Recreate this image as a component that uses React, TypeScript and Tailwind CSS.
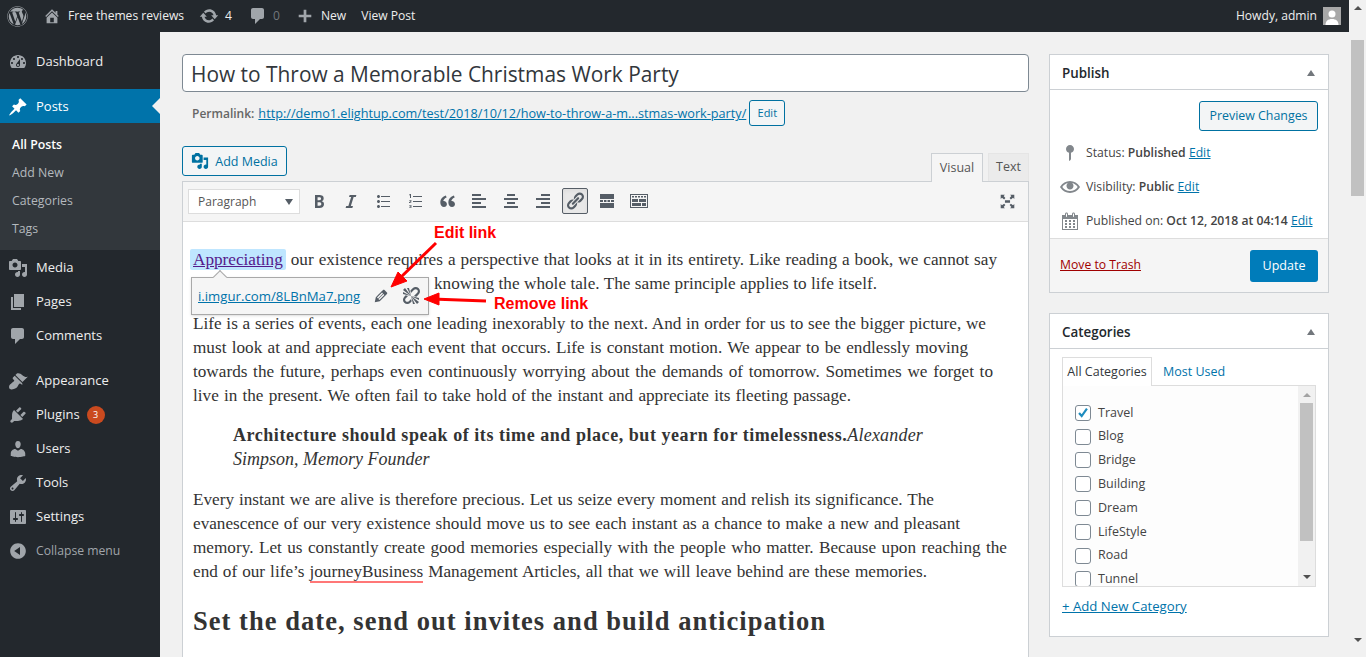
import type { ReactNode } from 'react';
import { FaWordpress } from 'react-icons/fa';

const icons: Record<string, string> = {
  dashboard: 'M3.76 16h12.48c1.1-1.37 1.76-3.11 1.76-5 0-4.42-3.58-8-8-8s-8 3.58-8 8c0 1.89.66 3.63 1.76 5zM10 4c.55 0 1 .45 1 1s-.45 1-1 1-1-.45-1-1 .45-1 1-1zM6 6c.55 0 1 .45 1 1s-.45 1-1 1-1-.45-1-1 .45-1 1-1zm8 0c.55 0 1 .45 1 1s-.45 1-1 1-1-.45-1-1 .45-1 1-1zm-5.37 5.55L12 7v6c0 1.1-.9 2-2 2s-2-.9-2-2c0-.57.24-1.08.63-1.45zM4 10c.55 0 1 .45 1 1s-.45 1-1 1-1-.45-1-1 .45-1 1-1zm12 0c.55 0 1 .45 1 1s-.45 1-1 1-1-.45-1-1 .45-1 1-1zm-5 3c0-.55-.45-1-1-1s-1 .45-1 1 .45 1 1 1 1-.45 1-1z',
  post: 'M10.44 3.02l1.82-1.82 6.36 6.35-1.83 1.82c-1.05-.68-2.48-.57-3.41.36l-.75.75c-.92.93-1.04 2.35-.35 3.41l-1.83 1.82-2.41-2.41-2.8 2.79c-.42.42-3.38 2.71-3.8 2.29s1.86-3.39 2.28-3.81l2.79-2.79L4.1 9.36l1.83-1.82c1.05.69 2.48.57 3.4-.36l.75-.75c.93-.92 1.05-2.35.36-3.41z',
  media: 'M13 11V4c0-.55-.45-1-1-1h-1.67L9 1H5L3.67 3H2c-.55 0-1 .45-1 1v7c0 .55.45 1 1 1h10c.55 0 1-.45 1-1zM7 4.5c1.38 0 2.5 1.12 2.5 2.5S8.38 9.5 7 9.5 4.5 8.38 4.5 7 5.62 4.5 7 4.5zM14 6h5v10.5c0 1.38-1.12 2.5-2.5 2.5S14 17.88 14 16.5s1.12-2.5 2.5-2.5c.17 0 .34.02.5.05V9h-3V6zm-4 8.05V13h2v3.5c0 1.38-1.12 2.5-2.5 2.5S7 17.88 7 16.5 8.12 14 9.5 14c.17 0 .34.02.5.05z',
  page: 'M6 15V2h10v13H6zm-1 1h8v2H3V5h2v11z',
  comment: 'M5 2h9c1.1 0 2 .9 2 2v7c0 1.1-.9 2-2 2h-2l-5 5v-5H5c-1.1 0-2-.9-2-2V4c0-1.1.9-2 2-2z',
  appearance: 'M14.48 11.06L7.41 3.99l1.5-1.5c.5-.56 2.3-.47 3.51.32 1.21.8 1.43 1.28 2.91 2.1 1.18.64 2.45 1.26 4.45.85zm-.71.71L6.7 4.7 4.93 6.47c-.39.39-.39 1.02 0 1.41l1.06 1.06c.39.39.39 1.03 0 1.42-.6.6-1.43 1.11-2.21 1.69-.35.26-.7.53-1.01.84C1.43 13.23.18 16.28 2 18c.52.48 1.07.5 1.77.44.7-.06 1.43-.25 2.13-.46 1.6-.48 3.12-1.28 3.83-2.64.38-.73.66-1.48 1.13-2.13.3-.42.65-.73 1.07-.75.47-.02.98.4 1.32.77.39.39 1.02.39 1.41 0z',
  plugin: 'M13.11 4.36L9.87 7.6 8 5.73l3.24-3.24c.35-.34 1.05-.2 1.56.32.52.51.66 1.21.31 1.55zm-8 1.77l.91-1.12 9.01 9.01-1.19.84c-.71.71-2.63 1.16-3.82 1.16H6.14L4.9 17.26c-.59.59-1.54.59-2.12 0-.59-.58-.59-1.53 0-2.12l1.24-1.24v-3.88c0-1.13.4-3.19 1.09-3.89zm7.26 3.97l3.24-3.24c.34-.35 1.04-.21 1.55.31.52.51.66 1.21.31 1.55l-3.24 3.25z',
  users: 'M10 9.25c-2.27 0-2.73-3.44-2.73-3.44C7 4.02 7.82 2 9.97 2c2.16 0 2.98 2.02 2.71 3.81 0 0-.41 3.44-2.68 3.44zm0 2.57L12.72 10c2.39 0 4.52 2.33 4.52 4.53v2.49s-3.65 1.13-7.24 1.13c-3.65 0-7.24-1.13-7.24-1.13v-2.49c0-2.25 1.94-4.48 4.47-4.48z',
  tools: 'M16.68 9.77c-1.34 1.34-3.3 1.67-4.95.99l-5.41 6.52c-.99.99-2.59.99-3.58 0s-.99-2.59 0-3.57l6.52-5.42c-.68-1.65-.35-3.61.99-4.95 1.28-1.28 3.12-1.62 4.72-1.06l-2.89 2.89 2.82 2.82 2.86-2.87c.53 1.58.18 3.39-1.08 4.65zM3.81 16.21c.4.39 1.04.39 1.43 0 .4-.4.4-1.04 0-1.43-.39-.4-1.03-.4-1.43 0-.39.39-.39 1.03 0 1.43z',
  settings: 'M18 16V4c0-.55-.45-1-1-1H3c-.55 0-1 .45-1 1v12c0 .55.45 1 1 1h14c.55 0 1-.45 1-1zM8 11h1c.55 0 1 .45 1 1s-.45 1-1 1H8v1.5c0 .28-.22.5-.5.5s-.5-.22-.5-.5V13H6c-.55 0-1-.45-1-1s.45-1 1-1h1V5.5c0-.28.22-.5.5-.5s.5.22.5.5V11zm5-2h-1c-.55 0-1-.45-1-1s.45-1 1-1h1V5.5c0-.28.22-.5.5-.5s.5.22.5.5V7h1c.55 0 1 .45 1 1s-.45 1-1 1h-1v5.5c0 .28-.22.5-.5.5s-.5-.22-.5-.5V9z',
  collapse: 'M10 2.16c4.33 0 7.84 3.51 7.84 7.84s-3.51 7.84-7.84 7.84S2.16 14.33 2.16 10 5.71 2.16 10 2.16zm2 11.72V6.12L6.18 9.97z',
  home: 'M16 8.5l1.53 1.53-1.06 1.06L10 4.62l-6.47 6.47-1.06-1.06L10 2.5l4 4v-2h2v4zm-6-2.46l6 5.99V18H4v-5.97zM12 17v-5H8v5h4z',
  update: 'M10.2 3.28c3.53 0 6.43 2.61 6.92 6h2.08l-3.5 4-3.5-4h2.32c-.45-1.97-2.21-3.45-4.32-3.45-1.45 0-2.73.71-3.54 1.78L4.95 5.66C6.23 4.2 8.11 3.28 10.2 3.28zm-.4 13.44c-3.52 0-6.43-2.61-6.92-6H.8l3.5-4c1.17 1.33 2.33 2.67 3.5 4H5.48c.45 1.97 2.21 3.45 4.32 3.45 1.45 0 2.73-.71 3.54-1.78l1.71 1.95c-1.28 1.46-3.15 2.38-5.25 2.38z',
  plus: 'M17 8.5v3h-5.5V17h-3v-5.5H3v-3h5.5V3h3v5.5H17z',
  bold: 'M6 4v13h4.54c1.37 0 2.46-.33 3.26-1 .8-.66 1.2-1.58 1.2-2.77 0-.84-.17-1.51-.51-2.01s-.9-.85-1.67-1.03v-.09c.57-.1 1.02-.4 1.36-.9s.51-1.13.51-1.91c0-1.14-.39-1.98-1.17-2.5C12.75 4.26 11.5 4 9.78 4H6zm2.57 5.15V6.26h1.36c.73 0 1.27.11 1.61.32.34.22.51.58.51 1.07 0 .54-.16.92-.47 1.15s-.82.35-1.51.35h-1.5zm0 2.19h1.6c1.44 0 2.16.53 2.16 1.61 0 .6-.17 1.05-.51 1.34s-.86.43-1.57.43H8.57v-3.38z',
  italic: 'M14.78 6h-2.13l-2.8 9h2.12l-.62 2H4.6l.62-2h2.14l2.8-9H8.03l.62-2h6.75z',
  ul: 'M5.5 7C4.67 7 4 6.33 4 5.5 4 4.68 4.67 4 5.5 4 6.32 4 7 4.68 7 5.5 7 6.33 6.32 7 5.5 7zM8 5h9v1H8V5zm-2.5 7c-.83 0-1.5-.67-1.5-1.5C4 9.68 4.67 9 5.5 9c.82 0 1.5.68 1.5 1.5 0 .83-.68 1.5-1.5 1.5zM8 10h9v1H8v-1zm-2.5 7c-.83 0-1.5-.67-1.5-1.5 0-.82.67-1.5 1.5-1.5.82 0 1.5.68 1.5 1.5 0 .83-.68 1.5-1.5 1.5zM8 15h9v1H8v-1z',
  ol: 'M6 7V3H5.2L4 3.8v.8l1-.6V7h1zM8 5h9v1H8V5zM4 9h2.4v1.6L5 11.4h1.4v.6H4v-.8l1.5-1V9.6H4V9zM8 10h9v1H8v-1zM4 14h2.4v3H4v-.6h1.6v-.6H4.6v-.5h1v-.7H4V14zM8 15h9v1H8v-1z',
  quote: 'M9.49 13.22c0-.78-.27-1.45-.8-1.99-.51-.53-1.16-.8-1.94-.8-.12 0-.26.02-.43.06.1-.7.42-1.33.96-1.9.55-.59 1.2-.99 1.95-1.21L8.6 5.6C7.2 6 6.04 6.78 5.12 7.93 4.2 9.07 3.75 10.35 3.75 11.77c0 1.12.3 2.05.9 2.76.61.72 1.38 1.08 2.3 1.08.71 0 1.31-.23 1.8-.69.5-.47.74-1.04.74-1.7zm7 0c0-.78-.27-1.45-.8-1.99-.51-.53-1.16-.8-1.94-.8-.12 0-.26.02-.43.06.1-.7.42-1.33.96-1.9.55-.59 1.2-.99 1.95-1.21L15.6 5.6c-1.4.4-2.56 1.18-3.48 2.33-.92 1.14-1.37 2.42-1.37 3.84 0 1.12.3 2.05.9 2.76.61.72 1.38 1.08 2.3 1.08.71 0 1.31-.23 1.8-.69.5-.47.74-1.04.74-1.7z',
  alignLeft: 'M12 5V3H3v2h9zm5 4V7H3v2h14zm-5 4v-2H3v2h9zm5 4v-2H3v2h14z',
  alignCenter: 'M14 5V3H6v2h8zm3 4V7H3v2h14zm-3 4v-2H6v2h8zm3 4v-2H3v2h14z',
  alignRight: 'M17 5V3H8v2h9zm0 4V7H3v2h14zm0 4v-2H8v2h9zm0 4v-2H3v2h14z',
  link: 'M17.74 2.76c1.68 1.69 1.68 4.41 0 6.1l-1.53 1.52c-1.12 1.12-2.7 1.47-4.14 1.09l2.62-2.61.76-.77.76-.76c.84-.84.84-2.2 0-3.04-.84-.85-2.2-.85-3.04 0l-.77.76-3.38 3.38c-.37-1.44-.02-3.02 1.1-4.14l1.52-1.53c1.69-1.68 4.42-1.68 6.1 0zM8.59 13.43l5.34-5.34c.42-.42.42-1.1 0-1.52-.44-.43-1.13-.39-1.53 0l-5.33 5.34c-.42.42-.42 1.1 0 1.52.44.43 1.13.39 1.52 0zm-.76 2.29l4.14-4.15c.38 1.44.03 3.02-1.09 4.14l-1.52 1.53c-1.69 1.68-4.41 1.68-6.1 0-1.68-1.68-1.68-4.42 0-6.1l1.53-1.52c1.12-1.12 2.7-1.47 4.14-1.1l-4.14 4.15c-.85.84-.85 2.2 0 3.05.84.84 2.2.84 3.04 0z',
  more: 'M3 3h14v5H3V3zm0 6h3v2H3V9zm4 0h2.5v2H7V9zm3.5 0H13v2h-2.5V9zM14 9h3v2h-3V9zM3 12h14v5H3v-5z',
  sink: 'M1 3h18v14H1V3zm1 1v12h16V4H2zm1 1h2v1.5H3V5zm3 0h2v1.5H6V5zm3 0h2v1.5H9V5zm3 0h2v1.5h-2V5zm3 0h2v1.5h-2V5zM3 8h6v3H3V8zm7 0h7v3h-7V8zM3 12h9v3H3v-3zm10 0h4v3h-4v-3z',
  fullscreen: 'M7 8.5h6v3H7v-3zM2 2h5L5.5 3.5 7.5 6 6 7.5 3.5 5.5 2 7V2zm16 0v5l-1.5-1.5L14 7.5 12.5 6l2-2.500L13 2h5zM2 18v-5l1.500 1.500L6 12.5 7.500 14l-2 2.500L7 18H2zm16 0h-5l1.500-1.500-2-2.500 1.500-1.500 2.500 2L18 13v5z',
  unlink: 'M17.74 2.26c1.68 1.69 1.68 4.41 0 6.1l-1.53 1.52c-.32.33-.69.58-1.08.77L13 10l1.69-1.64.76-.77.76-.76c.84-.84.84-2.2 0-3.04-.84-.85-2.2-.85-3.04 0l-.77.76-.76.76L10 7l-.65-2.14c.19-.38.44-.75.77-1.07l1.52-1.53c1.69-1.68 4.42-1.68 6.1 0zM2 4l8 6-6-8zm4-2l4 8-2-8H6zM2 6l8 4-8-2V6zm7.36 7.69L10 13l.74 2.35-1.38 1.39c-1.69 1.68-4.41 1.68-6.1 0-1.68-1.68-1.68-4.42 0-6.1l1.39-1.38L7 10l-.69.64-1.52 1.53c-.85.84-.85 2.2 0 3.04.84.85 2.2.85 3.04 0zM18 16l-8-6 6 8zm-4 2l-4-8 2 8h2zm4-4l-8-4 8 2v2z',
  edit: 'M13.89 3.39l2.71 2.72c.46.46.42 1.24.03 1.64l-8.01 8.02-5.56 1.16 1.16-5.58s7.6-7.63 7.99-8.03c.39-.39 1.22-.39 1.68.07zm-2.73 2.79l-5.59 5.61 1.11 1.11 5.54-5.65zm-2.97 8.23l5.58-5.6-1.07-1.08-5.59 5.6z',
  status: 'M14 6c0 1.86-1.28 3.41-3 3.86V16c0 1-2 2-2 2V9.86c-1.72-.45-3-2-3-3.86 0-2.21 1.79-4 4-4s4 1.79 4 4z',
  visibility: 'M19.7 9.4C17.7 6 14 3.9 10 3.9S2.3 6 .3 9.4L0 10l.3.6c2 3.4 5.7 5.5 9.7 5.5s7.7-2.1 9.7-5.5l.3-.6-.3-.6zM10 14.1c-3.1 0-6-1.6-7.7-4.1C3.6 8 5.7 6.6 8 6.1c-.9.6-1.5 1.7-1.5 2.9 0 1.9 1.6 3.5 3.5 3.5s3.5-1.6 3.5-3.5c0-1.2-.6-2.3-1.5-2.9 2.3.5 4.4 1.9 5.7 3.9-1.7 2.5-4.6 4.1-7.7 4.1z',
  calendar: 'M15 4h3v15H2V4h3V3c0-.41.15-.76.44-1.06.29-.29.65-.44 1.06-.44s.77.15 1.06.44c.29.3.44.65.44 1.06v1h4V3c0-.41.15-.76.44-1.06.29-.29.65-.44 1.06-.44s.77.15 1.06.44c.29.3.44.65.44 1.06v1zM6 3v2.5c0 .14.05.26.15.36.09.09.21.14.35.14s.26-.05.35-.14c.1-.1.15-.22.15-.36V3c0-.14-.05-.26-.15-.35-.09-.1-.21-.15-.35-.15s-.26.05-.35.15c-.1.09-.15.21-.15.35zm7 0v2.5c0 .14.05.26.14.36.1.09.22.14.36.14s.26-.05.36-.14c.09-.1.14-.22.14-.36V3c0-.14-.05-.26-.14-.35-.1-.1-.22-.15-.36-.15s-.26.05-.36.15c-.09.09-.14.21-.14.35zm4 15V8H3v10h14zM7 9v2H5V9h2zm2 0h2v2H9V9zm4 2V9h2v2h-2zm-6 1v2H5v-2h2zm2 0h2v2H9v-2zm4 2v-2h2v2h-2zm-6 1v2H5v-2h2zm4 2H9v-2h2v2zm4 0h-2v-2h2v2z',
};

function Dash({ name, className }: { name: string; className?: string }) {
  return (
    <svg viewBox="0 0 20 20" className={className} fill="currentColor" fillRule="evenodd">
      <path d={icons[name]} />
    </svg>
  );
}

const menuTop = [{ icon: 'dashboard', label: 'Dashboard' }];
const menuMid = [
  { icon: 'media', label: 'Media' },
  { icon: 'page', label: 'Pages' },
  { icon: 'comment', label: 'Comments' },
];
const menuBottom = [
  { icon: 'appearance', label: 'Appearance' },
  { icon: 'plugin', label: 'Plugins', badge: '3' },
  { icon: 'users', label: 'Users' },
  { icon: 'tools', label: 'Tools' },
  { icon: 'settings', label: 'Settings' },
];
const toolbarIcons = ['bold', 'italic', 'ul', 'ol', 'quote', 'alignLeft', 'alignCenter', 'alignRight', 'link', 'more', 'sink'];
const categories = ['Travel', 'Blog', 'Bridge', 'Building', 'Dream', 'LifeStyle', 'Road', 'Tunnel'];

function MenuItem({ icon, label, badge }: { icon: string; label: string; badge?: string }) {
  return (
    <div className="flex h-[34px] items-center pt-[2px] text-[13px] text-[#eeeeee]">
      <Dash name={icon} className="ml-[8px] mr-[8px] h-[20px] w-[20px] text-[#a0a5aa]" />
      <span>{label}</span>
      {badge && (
        <span className="ml-[7px] flex h-[18px] w-[18px] items-center justify-center rounded-full bg-[#ca4a1f] text-[9px] text-white">
          {badge}
        </span>
      )}
    </div>
  );
}

function BarItem({ children, className }: { children: ReactNode; className?: string }) {
  return <div className={`flex h-[32px] items-center ${className ?? ''}`}>{children}</div>;
}

function PostBox({ title, children }: { title: string; children: ReactNode }) {
  return (
    <section className="border border-[#ccd0d4] bg-white">
      <div className="flex h-[35px] items-center justify-between border-b border-[#ccd0d4] pl-[12px] pr-[13px] pt-[2px]">
        <h2 className="text-[13.4px] font-semibold text-[#23282d]">{title}</h2>
        <span className="h-0 w-0 border-x-[4px] border-b-[6px] border-x-transparent border-b-[#72777c]" />
      </div>
      {children}
    </section>
  );
}

function MetaRow({ icon, children }: { icon: string; children: ReactNode }) {
  return (
    <div className="flex h-[34px] items-center text-[12.2px] text-[#444444]">
      <Dash name={icon} className="ml-[10px] mr-[6px] h-[20px] w-[20px] text-[#82878c]" />
      <span>{children}</span>
    </div>
  );
}

// one rendered line of the post, stretched to the width it has in the editor
function Line({ w, children }: { w: string; children: ReactNode }) {
  return <span className={`block [text-align-last:justify] ${w}`}>{children}</span>;
}

export default function App() {
  return (
    <div className="flex h-[657px] w-[1366px] overflow-hidden bg-[#f1f1f1] font-['Open_Sans',sans-serif]">
      <div className="flex w-[1349px] flex-col">
        {/* Admin bar */}
        <header className="flex h-[32px] shrink-0 items-center bg-[#23282d] text-[12.1px] text-[#eeeeee]">
          <BarItem className="w-[34px] justify-center pl-[1px]">
            <FaWordpress className="h-[21px] w-[21px] text-[#a0a5aa]" />
          </BarItem>
          <BarItem className="ml-[9px]">
            <Dash name="home" className="mr-[7px] h-[18px] w-[18px] text-[#a0a5aa]" />
            Free themes reviews
          </BarItem>
          <BarItem className="ml-[15px]">
            <Dash name="update" className="mr-[6px] h-[20px] w-[20px] text-[#a0a5aa]" />
            4
          </BarItem>
          <BarItem className="ml-[16px]">
            <Dash name="comment" className="mr-[5px] h-[20px] w-[20px] text-[#a0a5aa]" />
            <span className="text-[#72777c]">0</span>
          </BarItem>
          <BarItem className="ml-[16px]">
            <Dash name="plus" className="mr-[7px] h-[18px] w-[18px] text-[#a0a5aa]" />
            New
          </BarItem>
          <BarItem className="ml-[15px]">View Post</BarItem>
          <BarItem className="ml-auto pr-[8px]">
            Howdy, admin
            <span className="ml-[6px] flex h-[18px] w-[18px] items-end justify-center overflow-hidden bg-[#a8a8a8]">
              <svg viewBox="0 0 18 18" className="h-[18px] w-[18px]" fill="#ffffff">
                <circle cx="9" cy="7" r="3.5" />
                <path d="M2.5 18c0-4 2.5-6 6.5-6s6.5 2 6.5 6z" />
              </svg>
            </span>
          </BarItem>
        </header>

        <div className="flex min-h-0 flex-1">
          {/* Sidebar */}
          <aside className="w-[160px] shrink-0 bg-[#23282d] pt-[12px]">
            {menuTop.map((m) => (
              <MenuItem key={m.label} {...m} />
            ))}
            <div className="h-[11px]" />
            <div className="relative flex h-[34px] items-center bg-[#0073aa] pt-[2px] text-[13px] text-white">
              <Dash name="post" className="ml-[8px] mr-[8px] h-[20px] w-[20px]" />
              Posts
              <span className="absolute right-0 top-[9px] h-0 w-0 border-y-[8px] border-r-[8px] border-y-transparent border-r-[#f1f1f1]" />
            </div>
            <div className="flex h-[127px] flex-col bg-[#32373c] py-[7px] text-[12.3px] text-[#b4b9be]">
              <div className="flex h-[28px] items-center pl-[12px] pt-[2px] font-semibold text-white">All Posts</div>
              <div className="flex h-[28px] items-center pl-[12px] pt-[2px]">Add New</div>
              <div className="flex h-[28px] items-center pl-[12px] pt-[2px]">Categories</div>
              <div className="flex h-[28px] items-center pl-[12px] pt-[2px]">Tags</div>
            </div>
            {menuMid.map((m) => (
              <MenuItem key={m.label} {...m} />
            ))}
            <div className="h-[11px]" />
            {menuBottom.map((m) => (
              <MenuItem key={m.label} {...m} />
            ))}
            <div className="flex h-[34px] items-center pt-[2px] text-[12.2px] text-[#a0a5aa]">
              <Dash name="collapse" className="ml-[8px] mr-[8px] h-[20px] w-[20px]" />
              Collapse menu
            </div>
          </aside>

          {/* Main */}
          <main className="flex min-w-0 flex-1 gap-[20px] pl-[22px] pt-[22px]">
            <div className="relative flex w-[847px] shrink-0 flex-col">
              <div className="flex h-[38px] shrink-0 items-center rounded-[4px] border border-[#7e8993] bg-white pl-[8px] pt-[3px] text-[20.9px] text-[#32373c]">
                How to Throw a Memorable Christmas Work Party
              </div>
              <div className="mt-[8px] flex h-[26px] shrink-0 items-center pl-[10px] text-[12.68px]">
                <span className="pt-[2px] text-[12px] font-semibold text-[#666666]">Permalink:</span>
                <a className="ml-[4px] pt-[2px] text-[#0073aa] underline">
                  http://demo1.elightup.com/test/2018/10/12/how-to-throw-a-m...stmas-work-party/
                </a>
                <span className="ml-[3px] flex h-[26px] w-[36px] items-center justify-center rounded-[3px] border border-[#0071a1] bg-[#f3f5f6] text-[11px] text-[#0071a1]">
                  Edit
                </span>
              </div>

              <div className="mt-[20px] flex h-[35px] shrink-0 justify-between">
                <div className="flex h-[30px] w-[105px] items-center justify-center rounded-[3px] border border-[#0071a1] bg-[#f3f5f6] text-[12.5px] text-[#0071a1]">
                  <Dash name="media" className="mr-[6px] h-[18px] w-[18px]" />
                  <span className="pt-[2px]">Add Media</span>
                </div>
                <div className="flex items-end">
                  <div className="relative top-[1px] flex h-[29px] w-[52px] items-center justify-center border border-b-0 border-[#ccd0d4] bg-[#f5f5f5] text-[12.5px] text-[#555555]">
                    Visual
                  </div>
                  <div className="ml-[5px] flex h-[28px] w-[41px] items-center justify-center border border-b-0 border-[#e5e5e5] bg-[#ebebeb] text-[12.5px] text-[#555555]">
                    Text
                  </div>
                </div>
              </div>

              <div className="flex min-h-0 flex-1 flex-col border border-b-0 border-[#ccd0d4] bg-white">
                <div className="flex h-[40px] shrink-0 items-center border-b border-[#dddddd] bg-[#f5f5f5] pl-[5px] pr-[12px] text-[#555d66]">
                  <div className="flex h-[25px] w-[112px] items-center justify-between border border-[#dddddd] bg-white pl-[9px] pr-[6px] text-[12px] text-[#555555]">
                    Paragraph
                    <span className="h-0 w-0 border-x-[4px] border-t-[6px] border-x-transparent border-t-[#555d66]" />
                  </div>
                  <div className="ml-[3px] flex -translate-y-[1px]">
                    {toolbarIcons.map((name) => (
                      <div key={name} className="flex h-[28px] w-[32px] items-center justify-center">
                        {name === 'link' ? (
                          <span className="flex h-[26px] w-[26px] items-center justify-center rounded-[2px] border border-[#555d66] bg-[#e8e8e8] shadow-inner">
                            <Dash name="link" className="h-[20px] w-[20px]" />
                          </span>
                        ) : (
                          <Dash name={name} className={name === 'quote' ? 'h-[23px] w-[23px]' : 'h-[20px] w-[20px]'} />
                        )}
                      </div>
                    ))}
                  </div>
                  <Dash name="fullscreen" className="ml-auto h-[17px] w-[17px]" />
                </div>

                {/* Editor body */}
                <div className="relative min-h-0 flex-1 overflow-hidden pl-[10px] pt-[26px] font-['Liberation_Serif',serif] text-[17.2px] leading-[24px] text-[#333333]">
                  <p>
                    <Line w="w-[804px]">
                      <a className="-ml-[3px] rounded-[2px] bg-[#bfe6ff] px-[3px] py-[1px] text-[#551a8b] underline">Appreciating</a>{' '}
                      our existence requires a perspective that looks at it in its entirety. Like reading a book, we cannot say
                    </Line>
                  </p>
                  <p className="pl-[241px]">
                    <Line w="w-[443px]">knowing the whole tale. The same principle applies to life itself.</Line>
                  </p>
                  <p className="mt-[16px]">
                    <Line w="w-[793px]">Life is a series of events, each one leading inexorably to the next. And in order for us to see the bigger picture, we</Line>
                    <Line w="w-[775px]">must look at and appreciate each event that occurs. Life is constant motion. We appear to be endlessly moving</Line>
                    <Line w="w-[800px]">towards the future, perhaps even continuously worrying about the demands of tomorrow. Sometimes we forget to</Line>
                    <Line w="w-[658px]">live in the present. We often fail to take hold of the instant and appreciate its fleeting passage.</Line>
                  </p>
                  <blockquote className="mt-[15px] whitespace-nowrap pl-[40px] text-[18px]">
                    <strong className="tracking-[0.55px]">Architecture should speak of its time and place, but yearn for timelessness.</strong>
                    <em className="tracking-[0.2px]">Alexander</em>
                    <br />
                    <em>Simpson, Memory Founder</em>
                  </blockquote>
                  <p className="mt-[17px]">
                    <Line w="w-[741px]">Every instant we are alive is therefore precious. Let us seize every moment and relish its significance. The</Line>
                    <Line w="w-[767px]">evanescence of our very existence should move us to see each instant as a chance to make a new and pleasant</Line>
                    <Line w="w-[814px]">memory. Let us constantly create good memories especially with the people who matter. Because upon reaching the</Line>
                    <Line w="w-[734px]">
                      end of our life’s <span className="border-b-2 border-[#ff7777]">journeyBusiness</span> Management Articles, all that we will leave behind are these memories.
                    </Line>
                  </p>
                  <h2 className="mt-[19px] whitespace-nowrap text-[26.5px] font-bold leading-[36px] tracking-[1.04px]">
                    Set the date, send out invites and build anticipation
                  </h2>

                  {/* Link popover */}
                  <div className="absolute left-[8px] top-[55px] flex h-[38px] w-[238px] items-center border border-[#a9a9a9] bg-[#f5f5f5] pl-[6px] font-['Open_Sans',sans-serif] text-[13.2px] text-[#0073aa] shadow-sm">
                    <span className="absolute -top-[6px] left-[23px] h-[10px] w-[10px] rotate-45 border-l border-t border-[#a9a9a9] bg-[#f5f5f5]" />
                    <span className="underline">i.imgur.com/8LBnMa7.png</span>
                    <Dash name="edit" className="ml-auto mr-[11px] h-[18px] w-[18px] text-[#555d66]" />
                    <Dash name="unlink" className="mr-[7px] h-[20px] w-[20px] text-[#555d66]" />
                  </div>
                </div>
              </div>

              {/* Annotations on the screenshot */}
              <span className="absolute left-[252px] top-[169px] font-['Liberation_Sans',sans-serif] text-[16px] font-bold leading-[20px] text-[#ff0000]">
                Edit link
              </span>
              <span className="absolute left-[312px] top-[240px] font-['Liberation_Sans',sans-serif] text-[16px] font-bold leading-[20px] text-[#ff0000]">
                Remove link
              </span>
              <svg className="absolute left-[200px] top-[170px] h-[100px] w-[320px]" viewBox="0 0 320 100" fill="#ff0000" stroke="#ff0000">
                <path d="M54 19L16 56" strokeWidth="3" />
                <path d="M9 63L25 57L16 48z" strokeWidth="1" />
                <path d="M104 77L50 75" strokeWidth="3" />
                <path d="M42 75L57 69L57 81z" strokeWidth="1" />
              </svg>
            </div>

            {/* Right column */}
            <div className="flex w-[280px] shrink-0 flex-col gap-[20px]">
              <PostBox title="Publish">
                <div className="flex justify-end pr-[10px] pt-[11px]">
                  <span className="flex h-[30px] w-[119px] items-center justify-center rounded-[3px] border border-[#0071a1] bg-[#f3f5f6] pt-[1px] text-[12.4px] text-[#0071a1]">
                    Preview Changes
                  </span>
                </div>
                <div className="pt-[5px]">
                  <MetaRow icon="status">
                    Status: <b className="font-semibold">Published</b> <a className="text-[#0073aa] underline">Edit</a>
                  </MetaRow>
                  <MetaRow icon="visibility">
                    Visibility: <b className="font-semibold">Public</b> <a className="text-[#0073aa] underline">Edit</a>
                  </MetaRow>
                  <MetaRow icon="calendar">
                    Published on: <b className="font-semibold">Oct 12, 2018 at 04:14</b> <a className="text-[#0073aa] underline">Edit</a>
                  </MetaRow>
                </div>
                <div className="flex h-[54px] items-center justify-between border-t border-[#dddddd] bg-[#f5f5f5] px-[10px]">
                  <a className="text-[12.2px] text-[#a00000] underline">Move to Trash</a>
                  <span className="flex h-[32px] w-[68px] items-center justify-center rounded-[3px] bg-[#007cba] pt-[2px] text-[12.5px] text-white">
                    Update
                  </span>
                </div>
              </PostBox>

              <PostBox title="Categories">
                <div className="h-[287px] px-[12px] pt-[8px]">
                  <div className="flex h-[28px] text-[12.5px]">
                    <span className="relative z-10 flex h-[29px] w-[90px] items-center justify-center border border-b-0 border-[#dddddd] bg-white text-[#32373c]">
                      All Categories
                    </span>
                    <span className="ml-[11px] flex items-center pt-[2px] text-[#0073aa]">Most Used</span>
                  </div>
                  <div className="flex h-[202px] overflow-hidden border border-[#dddddd] bg-[#fdfdfd] text-[12.5px] text-[#444444]">
                    <div className="flex-1 pl-[12px] pt-[15px]">
                      {categories.map((name, i) => (
                        <div key={name} className="flex h-[23.8px] items-center">
                          <span className="flex h-[16px] w-[16px] items-center justify-center rounded-[3px] border border-[#7e8993] bg-white">
                            {i === 0 && (
                              <svg viewBox="0 0 16 16" className="h-[16px] w-[16px]" fill="none" stroke="#1e8cbe" strokeWidth="2.5">
                                <path d="M3.5 8l3 3.5 6-8.5" />
                              </svg>
                            )}
                          </span>
                          <span className="ml-[7px]">{name}</span>
                        </div>
                      ))}
                    </div>
                    {/* list scrollbar */}
                    <div className="flex w-[17px] flex-col items-center bg-[#f1f1f1] pt-[7px]">
                      <span className="h-0 w-0 border-x-[4px] border-b-[4px] border-x-transparent border-b-[#a3a3a3]" />
                      <span className="mt-[6px] h-[138px] w-[13px] bg-[#c1c1c1]" />
                      <span className="mt-[34px] h-0 w-0 border-x-[4px] border-t-[4px] border-x-transparent border-t-[#505050]" />
                    </div>
                  </div>
                  <a className="mt-[10px] block text-[13.2px] text-[#0073aa] underline">+ Add New Category</a>
                </div>
              </PostBox>
            </div>
          </main>
        </div>
      </div>

      {/* Window scrollbar */}
      <div className="flex w-[17px] flex-col items-center bg-[#f1f1f1] pt-[6px]">
        <span className="h-0 w-0 border-x-[4px] border-b-[4px] border-x-transparent border-b-[#505050]" />
        <span className="mt-[30px] h-[156px] w-[13px] bg-[#c1c1c1]" />
        <span className="mt-[442px] h-0 w-0 border-x-[4px] border-t-[4px] border-x-transparent border-t-[#505050]" />
      </div>
    </div>
  );
}
